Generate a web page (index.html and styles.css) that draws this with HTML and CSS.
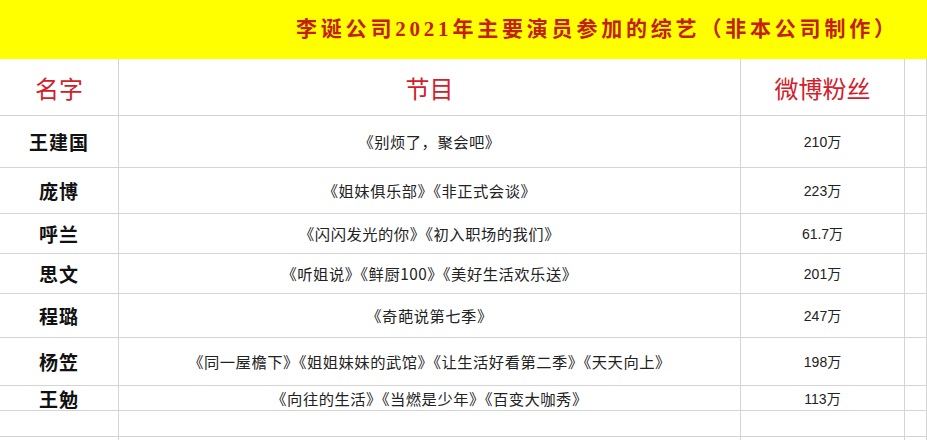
FILE: index.html
```html
<!DOCTYPE html>
<html lang="zh-CN">
<head>
<meta charset="utf-8">
<title>李诞公司2021年主要演员参加的综艺</title>
<link rel="stylesheet" href="styles.css">
</head>
<body>
<div class="sheet">
  <div class="banner"><span class="banner-text">李诞公司2021年主要演员参加的综艺（非本公司制作）</span></div>
  <div class="grid">
    <div class="cell head r0">名字</div>
    <div class="cell head r0">节目</div>
    <div class="cell head r0">微博粉丝</div>
    <div class="cell r0"></div>

    <div class="cell name r1">王建国</div>
    <div class="cell show r1">《别烦了，聚会吧》</div>
    <div class="cell fans r1">210万</div>
    <div class="cell r1"></div>

    <div class="cell name r2">庞博</div>
    <div class="cell show r2">《姐妹俱乐部》《非正式会谈》</div>
    <div class="cell fans r2">223万</div>
    <div class="cell r2"></div>

    <div class="cell name r3">呼兰</div>
    <div class="cell show r3">《闪闪发光的你》《初入职场的我们》</div>
    <div class="cell fans r3">61.7万</div>
    <div class="cell r3"></div>

    <div class="cell name r4">思文</div>
    <div class="cell show r4">《听姐说》《鲜厨100》《美好生活欢乐送》</div>
    <div class="cell fans r4">201万</div>
    <div class="cell r4"></div>

    <div class="cell name r5">程璐</div>
    <div class="cell show r5">《奇葩说第七季》</div>
    <div class="cell fans r5">247万</div>
    <div class="cell r5"></div>

    <div class="cell name r6">杨笠</div>
    <div class="cell show r6">《同一屋檐下》《姐姐妹妹的武馆》《让生活好看第二季》《天天向上》</div>
    <div class="cell fans r6">198万</div>
    <div class="cell r6"></div>

    <div class="cell name r7">王勉</div>
    <div class="cell show r7">《向往的生活》《当燃是少年》《百变大咖秀》</div>
    <div class="cell fans r7">113万</div>
    <div class="cell r7"></div>

    <div class="cell r8"></div>
    <div class="cell r8"></div>
    <div class="cell r8"></div>
    <div class="cell r8"></div>

    <div class="cell r9"></div>
    <div class="cell r9"></div>
    <div class="cell r9"></div>
    <div class="cell r9"></div>
  </div>
</div>
</body>
</html>
```
FILE: styles.css
```css
* { box-sizing: border-box; }
html, body { margin: 0; padding: 0; background: #ffffff; }
body {
  font-family: "Noto Sans CJK SC", "Noto Sans", sans-serif;
  width: 927px;
  height: 440px;
  overflow: hidden;
}
.sheet { width: 927px; }
.banner {
  height: 59px;
  background: #ffff00;
  display: flex;
  align-items: center;
  padding-left: 296px;
}
.banner-text {
  color: #c4200f;
  font-family: "Liberation Serif", "Noto Sans CJK SC", serif;
  font-weight: 700;
  font-size: 21px;
  letter-spacing: 3.8px;
  line-height: 1;
  white-space: nowrap;
}
.grid {
  display: grid;
  grid-template-columns: 119px 622px 164px 1fr;
  grid-template-rows: 57px 52px 46px 40px 40px 44px 48px 25px 26px 3px;
}
.cell {
  border-right: 1px solid #d4d4d4;
  border-bottom: 1px solid #d4d4d4;
  display: flex;
  align-items: center;
  justify-content: center;
  white-space: nowrap;
  overflow: hidden;
  line-height: 1;
}
.head {
  color: #d2202a;
  font-size: 24px;
  font-weight: 400;
  padding-top: 2px;
}
.name {
  color: #111111;
  font-size: 19px;
  font-weight: 700;
  letter-spacing: 1px;
}
.show {
  color: #222222;
  font-size: 15.3px;
  font-weight: 400;
  letter-spacing: 0.5px;
}
.fans {
  color: #222222;
  font-family: "Liberation Sans", "Noto Sans CJK SC", sans-serif;
  font-size: 14px;
}
.r7.show, .r7.fans { padding-top: 2px; }
.r9 { border-bottom: none; }
```
